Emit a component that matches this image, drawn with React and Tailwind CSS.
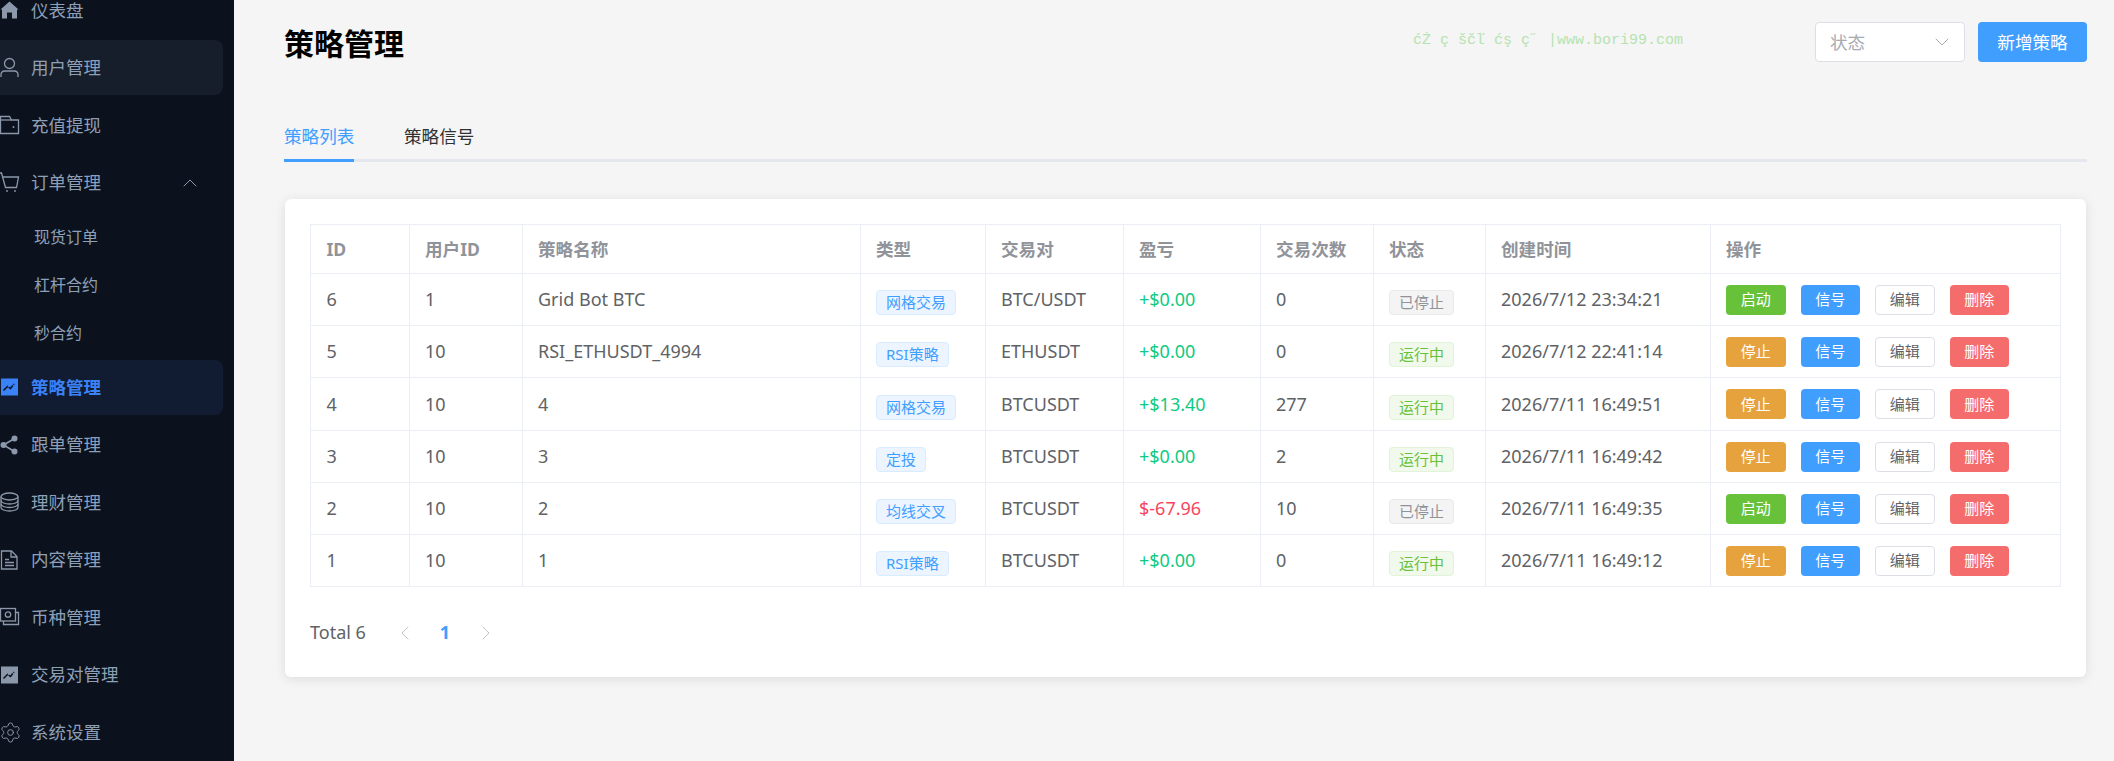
import { Settings, ChevronUp, ChevronDown, ChevronLeft, ChevronRight } from 'lucide-react';

const Svg = ({ children, className = '' }) => (
  <svg viewBox="0 0 20 20" fill="none" stroke="currentColor" strokeWidth="1.3" className={`w-5 h-5 shrink-0 overflow-visible ${className}`}>
    {children}
  </svg>
);

const HomeIcon = () => (
  <Svg><path d="M9.5 1.5 18.5 9.5H17V18.500H12V12.500H7V18.500H2V9.500H0.500Z" fill="currentColor" stroke="none" /></Svg>
);
const UserIcon = () => (
  <Svg>
    <circle cx="9.500" cy="5.500" r="5" />
    <path d="M1 19v-2.500a3.500 3.500 0 0 1 3.500-3.500h10a3.500 3.500 0 0 1 3.500 3.500V19" />
  </Svg>
);
const WalletIcon = () => (
  <Svg>
    <path d="M0.500 18.500V1.500H9.500L11.500 5H18.500V18.500Z" />
    <path d="M0.500 5H11.500" />
    <circle cx="13.500" cy="12" r="1" fill="currentColor" stroke="none" />
  </Svg>
);
const CartIcon = () => (
  <Svg>
    <path d="M-1 0H1.500L5.500 14.500H16.500L18.500 4H3" />
    <circle cx="7" cy="18" r="0.900" fill="currentColor" stroke="none" />
    <circle cx="15" cy="18" r="0.900" fill="currentColor" stroke="none" />
  </Svg>
);
const ChartIcon = () => (
  <Svg>
    <rect x="1" y="1.500" width="17" height="17" fill="currentColor" stroke="none" />
    <path d="M3.500 13.500 7.500 9.500 10.500 11.500 14 7" stroke="#0c121d" strokeWidth="1.500" strokeDasharray="6 1" />
  </Svg>
);
const ShareIcon = () => (
  <Svg>
    <path d="M14.500 3.500 3.500 10 14.500 16.500" strokeWidth="1.600" />
    <circle cx="14.500" cy="3.500" r="3" fill="currentColor" stroke="none" />
    <circle cx="3.500" cy="10" r="3" fill="currentColor" stroke="none" />
    <circle cx="14.500" cy="16.500" r="3" fill="currentColor" stroke="none" />
  </Svg>
);
const CoinIcon = () => (
  <Svg>
    <ellipse cx="9.500" cy="4.500" rx="8.500" ry="3.500" />
    <path d="M1 4.500V15.500C1 17.500 5 19 9.500 19S18 17.500 18 15.500V4.500" />
    <path d="M1 8.500C1 10.500 5 12 9.500 12S18 10.500 18 8.500" />
    <path d="M1 12C1 14 5 15.500 9.500 15.500S18 14 18 12" />
  </Svg>
);
const DocIcon = () => (
  <Svg>
    <path d="M1.500 1H11.500L17 6.500V19H1.500Z" />
    <path d="M11 1V7H17" />
    <path d="M5 9.500H9M5 12.500H14M5 15.500H14" />
  </Svg>
);
const MoneyIcon = () => (
  <Svg>
    <rect x="0.500" y="1.500" width="15" height="12.500" />
    <path d="M3.500 14V17.500H18.500V5.500H15.500" />
    <circle cx="8" cy="7.500" r="2.700" />
  </Svg>
);
const GearIcon = () => (
  <span className="flex items-center justify-center w-5 h-5">
    <Settings size={23} strokeWidth={1} className="shrink-0" />
  </span>
);

const Item = ({ icon, label, active, hover, right }) => (
  <div className={`flex items-center h-[55px] mb-[2.500px] ml-[-10px] w-[233px] pl-[10px] pr-[21px] gap-[11px] rounded-lg text-[17.500px] ${active ? 'text-[#3b82f6] font-bold bg-[#111c33]' : hover ? 'text-[#8ea0b8] bg-[#171e2b]' : 'text-[#8ea0b8]'}`}>
    <span className={active ? 'text-[#3b82f6]' : 'text-[#8b98ab]'}>{icon}</span>
    <span className="flex-1">{label}</span>
    {right}
  </div>
);

const Sub = ({ label }) => (
  <div className="flex items-center h-[48px] pl-[34px] pt-[1px] text-[16px] text-[#8ea0b8]">{label}</div>
);

const Sidebar = () => (
  <aside className="w-[234px] h-[761px] shrink-0 overflow-hidden bg-[#0c121d]">
    <div className="mt-[-17.500px]">
      <Item icon={<HomeIcon />} label="仪表盘" />
      <Item icon={<UserIcon />} label="用户管理" hover />
      <Item icon={<WalletIcon />} label="充值提现" />
      <Item icon={<CartIcon />} label="订单管理" right={<ChevronUp size={24} strokeWidth={1} className="text-[#8b98ab]" />} />
      <div className="mb-[3px]">
        <Sub label="现货订单" />
        <Sub label="杠杆合约" />
        <Sub label="秒合约" />
      </div>
      <Item icon={<ChartIcon />} label="策略管理" active />
      <Item icon={<ShareIcon />} label="跟单管理" />
      <Item icon={<CoinIcon />} label="理财管理" />
      <Item icon={<DocIcon />} label="内容管理" />
      <Item icon={<MoneyIcon />} label="币种管理" />
      <Item icon={<ChartIcon />} label="交易对管理" />
      <Item icon={<GearIcon />} label="系统设置" />
    </div>
  </aside>
);

const ROWS = [
  { id: 6, uid: 1, name: 'Grid Bot BTC', type: '网格交易', pair: 'BTC/USDT', pnl: '+$0.00', n: 0, on: false, time: '2026/7/12 23:34:21' },
  { id: 5, uid: 10, name: 'RSI_ETHUSDT_4994', type: 'RSI策略', pair: 'ETHUSDT', pnl: '+$0.00', n: 0, on: true, time: '2026/7/12 22:41:14' },
  { id: 4, uid: 10, name: '4', type: '网格交易', pair: 'BTCUSDT', pnl: '+$13.40', n: 277, on: true, time: '2026/7/11 16:49:51' },
  { id: 3, uid: 10, name: '3', type: '定投', pair: 'BTCUSDT', pnl: '+$0.00', n: 2, on: true, time: '2026/7/11 16:49:42' },
  { id: 2, uid: 10, name: '2', type: '均线交叉', pair: 'BTCUSDT', pnl: '$-67.96', n: 10, on: false, time: '2026/7/11 16:49:35' },
  { id: 1, uid: 10, name: '1', type: 'RSI策略', pair: 'BTCUSDT', pnl: '+$0.00', n: 0, on: true, time: '2026/7/11 16:49:12' },
];

const HEADERS = ['ID', '用户ID', '策略名称', '类型', '交易对', '盈亏', '交易次数', '状态', '创建时间', '操作'];

const Tag = ({ className, children }) => (
  <span className={`inline-flex items-center h-[25px] px-[9px] rounded border text-[15px] leading-none translate-y-[2px] ${className}`}>{children}</span>
);

const Btn = ({ className, children }) => (
  <button type="button" className={`w-[59.500px] h-[30px] rounded text-[15px] leading-none ${className}`}>{children}</button>
);

const td = 'pl-[15.500px] pr-[15px] border border-[#ebeef5] align-middle';

export default function App() {
  return (
    <div className="flex w-[2114px] h-[761px] overflow-hidden bg-[#f5f5f5] font-['Noto_Sans','Noto_Sans_CJK_SC',sans-serif]">
      <Sidebar />
      <main className="flex-1 pl-[50px] pr-[27px] pt-[22px]">
        <div className="flex items-center h-[40px]">
          <h1 className="text-[30px] font-bold text-black pt-[2px]">策略管理</h1>
          <span className="ml-[1009px] whitespace-pre text-[15px] font-['Liberation_Mono',monospace] text-[#b5e3b0] -translate-y-[1px]">ćŻ ç ščľ ćş ç˝ |www.bori99.com</span>
          <div className="ml-auto flex items-center gap-[13px]">
            <div className="flex items-center justify-between w-[150px] h-[40px] pl-[14px] pr-[10px] bg-white border border-[#dcdfe6] rounded text-[17.600px] text-[#a8abb2]">
              状态
              <ChevronDown size={24} strokeWidth={1} className="text-[#a8abb2]" />
            </div>
            <button type="button" className="w-[109px] h-[40px] bg-[#409eff] text-white rounded text-[17.600px]">新增策略</button>
          </div>
        </div>

        <div className="flex gap-[50px] mt-[53px] border-b-[3px] border-[#e4e7ed] text-[17.600px]">
          <div className="h-[47px] -mb-[3px] pb-[2px] border-b-[3px] border-[#409eff] text-[#409eff] flex items-center w-[70px] whitespace-nowrap">策略列表</div>
          <div className="h-[47px] -mb-[3px] pb-[5px] flex items-center text-[#303133] whitespace-nowrap">策略信号</div>
        </div>

        <section className="mx-[1px] mt-[37px] h-[478px] bg-white rounded-md shadow-[0_2px_12px_rgba(0,0,0,0.1)] px-[25px] pt-[25px]">
          <table className="w-[1750px] table-fixed border-collapse text-[18px] text-[#606266]">
            <colgroup>
              <col className="w-[98.500px]" />
              <col className="w-[113px]" />
              <col className="w-[338px]" />
              <col className="w-[125px]" />
              <col className="w-[138px]" />
              <col className="w-[137px]" />
              <col className="w-[113px]" />
              <col className="w-[112px]" />
              <col className="w-[225px]" />
              <col className="w-[350.500px]" />
            </colgroup>
            <thead>
              <tr className="h-[49px]">
                {HEADERS.map((h) => (
                  <th key={h} className={`${td} text-left text-[17.600px] font-bold text-[#909399]`}>{h}</th>
                ))}
              </tr>
            </thead>
            <tbody>
              {ROWS.map((r, i) => (
                <tr key={r.id} className={i === 2 ? 'h-[53px]' : 'h-[52px]'}>
                  <td className={td}>{r.id}</td>
                  <td className={td}>{r.uid}</td>
                  <td className={td}>{r.name}</td>
                  <td className={td}>
                    <Tag className="bg-[#ecf5ff] border-[#d9ecff] text-[#409eff]">{r.type}</Tag>
                  </td>
                  <td className={td}>{r.pair}</td>
                  <td className={`${td} ${r.pnl.startsWith('+') ? 'text-[#0ecb81]' : 'text-[#f6465d]'}`}>{r.pnl}</td>
                  <td className={td}>{r.n}</td>
                  <td className={td}>
                    {r.on
                      ? <Tag className="bg-[#f0f9eb] border-[#e1f3d8] text-[#67c23a]">运行中</Tag>
                      : <Tag className="bg-[#f4f4f5] border-[#e9e9eb] text-[#909399]">已停止</Tag>}
                  </td>
                  <td className={td}>{r.time}</td>
                  <td className={td}>
                    <div className="flex gap-[15px]">
                      {r.on
                        ? <Btn className="bg-[#e6a23c] text-white">停止</Btn>
                        : <Btn className="bg-[#67c23a] text-white">启动</Btn>}
                      <Btn className="bg-[#409eff] text-white">信号</Btn>
                      <Btn className="bg-white border border-[#dcdfe6] text-[#606266]">编辑</Btn>
                      <Btn className="bg-[#f56c6c] text-white">删除</Btn>
                    </div>
                  </td>
                </tr>
              ))}
            </tbody>
          </table>

          <div className="flex items-center h-[32px] mt-[29.500px] text-[18px] text-[#606266]">
            <span className="w-[82.500px]">Total 6</span>
            <ChevronLeft size={24} strokeWidth={1} className="text-[#c0c4cc]" />
            <span className="w-[24px] mx-[16.500px] text-center font-bold text-[#409eff]">1</span>
            <ChevronRight size={24} strokeWidth={1} className="text-[#c0c4cc]" />
          </div>
        </section>
      </main>
    </div>
  );
}
